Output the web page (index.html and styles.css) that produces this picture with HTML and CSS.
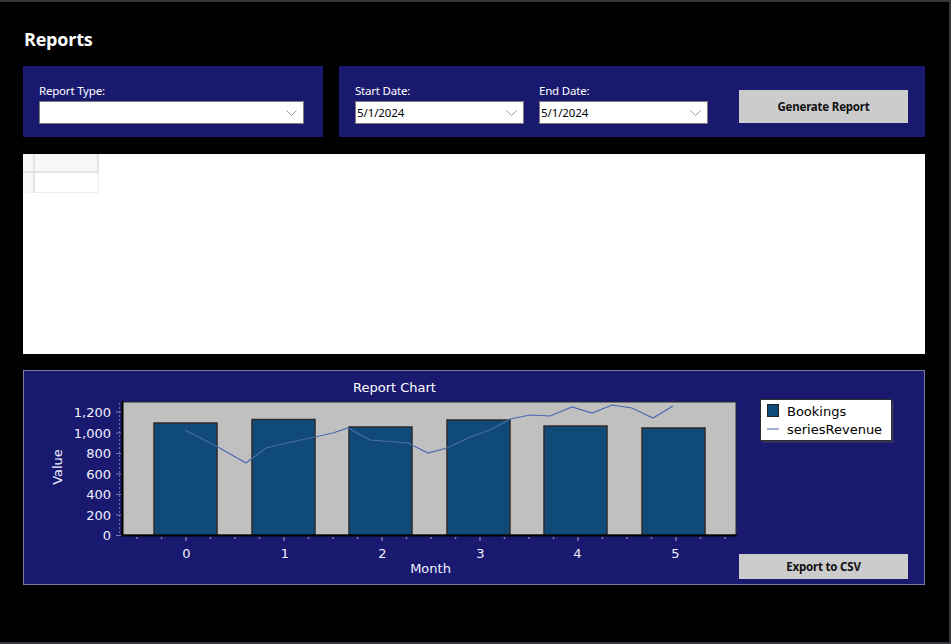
FILE: index.html
```html
<!DOCTYPE html>
<html>
<head>
<meta charset="utf-8">
<title>Reports</title>
<link rel="stylesheet" href="styles.css">
</head>
<body>
<div class="window">
  <h1 class="title">Reports</h1>
  <div class="filters">
    <div class="panel panel-type">
      <div class="field">
        <label class="label">Report Type:</label>
        <div class="combo combo-wide">
          <span class="combo-text"></span>
          <svg class="chev" width="11" height="6" viewBox="0 0 11 6"><path d="M0.5 0.5 L5.5 5.5 L10.5 0.5" fill="none" stroke="#9a9a9a" stroke-width="1"/></svg>
        </div>
      </div>
    </div>
    <div class="panel panel-dates">
      <div class="field">
        <label class="label">Start Date:</label>
        <div class="combo">
          <span class="combo-text">5/1/2024</span>
          <svg class="chev" width="11" height="6" viewBox="0 0 11 6"><path d="M0.5 0.5 L5.5 5.5 L10.5 0.5" fill="none" stroke="#9a9a9a" stroke-width="1"/></svg>
        </div>
      </div>
      <div class="field">
        <label class="label">End Date:</label>
        <div class="combo">
          <span class="combo-text">5/1/2024</span>
          <svg class="chev" width="11" height="6" viewBox="0 0 11 6"><path d="M0.5 0.5 L5.5 5.5 L10.5 0.5" fill="none" stroke="#9a9a9a" stroke-width="1"/></svg>
        </div>
      </div>
      <button class="btn btn-generate">Generate Report</button>
    </div>
  </div>

  <div class="grid-area">
    <div class="dgv">
      <div class="cell corner"></div>
      <div class="cell colhead"></div>
      <div class="cell rowhead"></div>
      <div class="cell data"></div>
    </div>
  </div>

  <div class="chart-panel">
    <svg class="chart" width="900" height="213" viewBox="24 371 900 213" xmlns="http://www.w3.org/2000/svg">
      <text x="394.5" y="392" class="ct-title" text-anchor="middle">Report Chart</text>

      <!-- plot area -->
      <rect x="122" y="402" width="614" height="133" fill="#c0c0c0" stroke="#2a2a2a" stroke-width="1"/>

      <!-- bars -->
      <g fill="#0f4a78" stroke="#2b2b2b" stroke-width="1.5">
        <rect x="154" y="423" width="63" height="112"/>
        <rect x="252" y="419.5" width="63" height="115.5"/>
        <rect x="349" y="427" width="63" height="108"/>
        <rect x="447" y="420" width="63" height="115"/>
        <rect x="544" y="426" width="63" height="109"/>
        <rect x="642" y="428" width="63" height="107"/>
      </g>

      <!-- revenue line -->
      <polyline fill="none" stroke="#4a6ab0" stroke-width="1.2" points="185,430 216,446 246,463 266,448 287,443 310,438 333,433 348,428 370,440 408,443 428,453 447,448 470,437 490,430 510,419 530,415 550,416 572,407 592,413 612,405 632,408 653,418 673,406"/>

      <!-- axes -->
      <line x1="122.5" y1="401" x2="122.5" y2="536" stroke="#000" stroke-width="2"/>
      <line x1="121" y1="535.5" x2="737" y2="535.5" stroke="#000" stroke-width="2"/>

      <!-- y ticks -->
      <line x1="119.5" y1="403" x2="119.5" y2="535" stroke="#6a6aa0" stroke-width="1" stroke-dasharray="2,2"/>
      <g stroke="#7a7aa8" stroke-width="1">
        <line x1="116" y1="535.5" x2="121" y2="535.5"/>
        <line x1="116" y1="515" x2="121" y2="515"/>
        <line x1="116" y1="494.5" x2="121" y2="494.5"/>
        <line x1="116" y1="474" x2="121" y2="474"/>
        <line x1="116" y1="453.5" x2="121" y2="453.5"/>
        <line x1="116" y1="433" x2="121" y2="433"/>
        <line x1="116" y1="412" x2="121" y2="412"/>
      </g>
      <g class="ct-label" text-anchor="end">
        <text x="111" y="540">0</text>
        <text x="111" y="519.5">200</text>
        <text x="111" y="499">400</text>
        <text x="111" y="478.5">600</text>
        <text x="111" y="458">800</text>
        <text x="111" y="437.5">1,000</text>
        <text x="111" y="416.5">1,200</text>
      </g>
      <text class="ct-label" transform="translate(61.5 467) rotate(-90)" text-anchor="middle">Value</text>

      <!-- x ticks -->
      <g stroke="#7a7aa8" stroke-width="1.5">
        <line x1="137" y1="537" x2="137" y2="539"/>
        <line x1="161.5" y1="537" x2="161.5" y2="539"/>
        <line x1="186" y1="537" x2="186" y2="541"/>
        <line x1="210.5" y1="537" x2="210.5" y2="539"/>
        <line x1="235" y1="537" x2="235" y2="539"/>
        <line x1="259.5" y1="537" x2="259.5" y2="539"/>
        <line x1="284" y1="537" x2="284" y2="541"/>
        <line x1="308.5" y1="537" x2="308.5" y2="539"/>
        <line x1="333" y1="537" x2="333" y2="539"/>
        <line x1="357.5" y1="537" x2="357.5" y2="539"/>
        <line x1="382" y1="537" x2="382" y2="541"/>
        <line x1="406.5" y1="537" x2="406.5" y2="539"/>
        <line x1="431" y1="537" x2="431" y2="539"/>
        <line x1="455.5" y1="537" x2="455.5" y2="539"/>
        <line x1="480" y1="537" x2="480" y2="541"/>
        <line x1="504.5" y1="537" x2="504.5" y2="539"/>
        <line x1="529" y1="537" x2="529" y2="539"/>
        <line x1="553.5" y1="537" x2="553.5" y2="539"/>
        <line x1="578" y1="537" x2="578" y2="541"/>
        <line x1="602.5" y1="537" x2="602.5" y2="539"/>
        <line x1="627" y1="537" x2="627" y2="539"/>
        <line x1="651.5" y1="537" x2="651.5" y2="539"/>
        <line x1="676" y1="537" x2="676" y2="541"/>
        <line x1="700.5" y1="537" x2="700.5" y2="539"/>
        <line x1="725" y1="537" x2="725" y2="539"/>
      </g>
      <g class="ct-label" text-anchor="middle">
        <text x="186.5" y="558">0</text>
        <text x="285" y="558">1</text>
        <text x="382.5" y="558">2</text>
        <text x="480.5" y="558">3</text>
        <text x="577.5" y="558">4</text>
        <text x="675.5" y="558">5</text>
        <text x="430.5" y="573">Month</text>
      </g>

      <!-- legend -->
      <rect x="762.5" y="401.5" width="131" height="41" fill="#3a3a5a"/>
      <rect x="760.5" y="399.5" width="131" height="41" fill="#ffffff" stroke="#303030" stroke-width="1"/>
      <rect x="767.5" y="404.5" width="11" height="12" fill="#0f4a78" stroke="#222" stroke-width="1"/>
      <line x1="767" y1="429" x2="779" y2="429" stroke="#9fb0d6" stroke-width="2"/>
      <text class="ct-legend" x="787" y="415.5">Bookings</text>
      <text class="ct-legend" x="787" y="434">seriesRevenue</text>
    </svg>
    <button class="btn btn-export">Export to CSV</button>
  </div>
</div>
</body>
</html>
```

FILE: styles.css
```css
* {
  box-sizing: border-box;
}

html, body {
  margin: 0;
  padding: 0;
  background: #000;
}

.window {
  width: 951px;
  height: 644px;
  background: #000;
  border-top: 2px solid #37373b;
  border-right: 2px solid #37373b;
  border-bottom: 2px solid #37373b;
  padding: 0 0 0 23px;
  font-family: "Noto Sans", "Open Sans", sans-serif;
  overflow: hidden;
}

.title {
  margin: 0;
  padding: 23px 0 0 1px;
  height: 64px;
  font-family: "Open Sans", "Noto Sans", sans-serif;
  font-weight: 700;
  font-size: 18px;
  line-height: 28px;
  color: #fff;
  letter-spacing: -0.2px;
}

.filters {
  display: flex;
  gap: 16px;
  height: 71px;
}

.panel {
  background: #191970;
  height: 71px;
  padding: 17px 16px 0 16px;
}

.panel-type {
  width: 300px;
}

.panel-dates {
  width: 586px;
  display: flex;
  gap: 15px;
}

.field {
  display: flex;
  flex-direction: column;
}

.label {
  display: block;
  color: #fff;
  font-size: 11.5px;
  line-height: 16px;
  height: 18px;
  letter-spacing: -0.2px;
}

.combo {
  width: 169px;
  height: 23px;
  background: #fff;
  border: 1px solid #7a7a7a;
  display: flex;
  align-items: center;
  justify-content: space-between;
  padding: 0 6px 0 1px;
}

.combo-wide {
  width: 265px;
}

.combo-text {
  font-size: 11.5px;
  color: #000;
  line-height: 21px;
  letter-spacing: -0.1px;
}

.chev {
  display: block;
  margin-top: 1px;
}

.btn {
  border: none;
  background: #cccccc;
  font-family: "Noto Sans", "Open Sans", sans-serif;
  font-weight: 700;
  font-size: 11.5px;
  color: #111;
  padding: 0;
  letter-spacing: -0.2px;
}

.btn-generate {
  width: 169px;
  height: 33px;
  margin-top: 7px;
  margin-left: 16px;
}

.grid-area {
  margin-top: 17px;
  width: 902px;
  height: 200px;
  background: #fff;
}

.dgv {
  display: grid;
  grid-template-columns: 12px 64px;
  grid-template-rows: 19px 20px;
}

.cell {
  background: #f7f7f7;
}

.corner {
  border-right: 2px solid #e3e3e3;
  border-bottom: 2px solid #e3e3e3;
}

.colhead {
  border-right: 2px solid #e3e3e3;
  border-bottom: 2px solid #e3e3e3;
}

.rowhead {
  border-right: 2px solid #e3e3e3;
}

.data {
  background: #fff;
  border-right: 1px solid #ededed;
  border-bottom: 1px solid #ededed;
}

.chart-panel {
  margin-top: 16px;
  width: 902px;
  height: 215px;
  background: #191970;
  border: 1px solid #7c7cab;
  display: grid;
}

.chart-panel > * {
  grid-area: 1 / 1;
}

.chart {
  display: block;
}

.ct-title {
  font-family: "DejaVu Sans", sans-serif;
  font-size: 13px;
  fill: #ffffff;
}

.ct-label {
  font-family: "DejaVu Sans", sans-serif;
  font-size: 13px;
  fill: #f2f2ff;
}

.ct-legend {
  font-family: "DejaVu Sans", sans-serif;
  font-size: 13px;
  fill: #000;
}

.btn-export {
  width: 169px;
  height: 25px;
  justify-self: end;
  align-self: end;
  margin: 0 16px 5px 0;
}
```
